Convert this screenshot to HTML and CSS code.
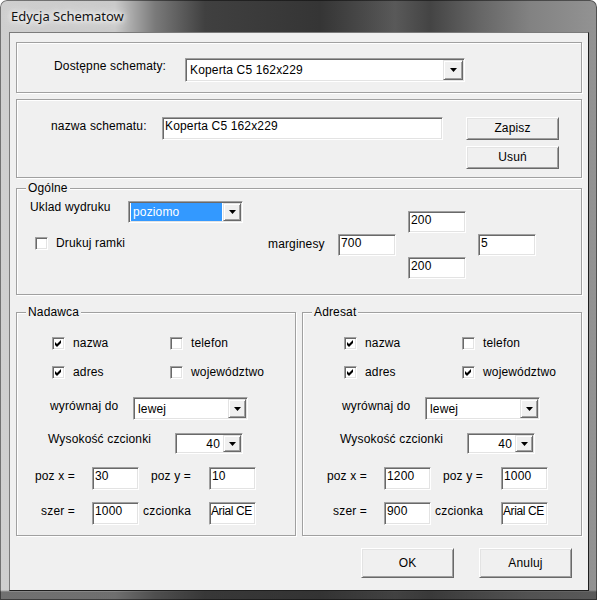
FILE: index.html
```html
<!DOCTYPE html>
<html lang="pl">
<head>
<meta charset="utf-8">
<title>Edycja Schematow</title>
<link rel="stylesheet" href="styles.css">
</head>
<body>
<div class="window">
  <div class="titlebar"><span class="title">Edycja Schematow</span></div>
  <div class="client">
    <div class="group g1">
      <div class="g1-row">
        <span class="lbl l-dost">Dostępne schematy:</span>
        <div class="combo c-scheme"><span class="combo-text">Koperta C5 162x229</span><span class="combo-btn wide"><svg width="7" height="4" viewBox="0 0 7 4"><path d="M0 0H7L3.5 4Z"/></svg></span></div>
      </div>
    </div>

    <div class="group g2">
      <div class="g2-row">
        <span class="lbl l-nazwa">nazwa schematu:</span>
        <div class="edit e-nazwa">Koperta C5 162x229</div>
        <div class="btncol">
          <div class="btn btn-sm">Zapisz</div>
          <div class="btn btn-sm">Usuń</div>
        </div>
      </div>
    </div>

    <div class="group g3">
      <span class="legend">Ogólne</span>
      <div class="gen">
        <div class="gen-left">
          <div class="frow">
            <span class="lbl l-uklad">Uklad wydruku</span>
            <div class="combo c-uklad"><span class="combo-text sel">poziomo</span><span class="combo-btn"><svg width="7" height="4" viewBox="0 0 7 4"><path d="M0 0H7L3.5 4Z"/></svg></span></div>
          </div>
          <label class="chk chk-ramki"><span class="cb"></span><span class="chk-t">Drukuj ramki</span></label>
        </div>
        <span class="lbl l-marg">marginesy</span>
        <div class="marg-grid">
          <div class="edit m-top">200</div>
          <div class="edit m-left">700</div>
          <div class="edit m-right">5</div>
          <div class="edit m-bottom">200</div>
        </div>
      </div>
    </div>

    <div class="cols">
      <div class="group gcol g4">
        <span class="legend">Nadawca</span>
        <div class="gbody">
          <div class="checks">
            <label class="chk"><span class="cb"><svg width="11" height="11" viewBox="0 0 11 11"><path d="M2 4L4 6L8 2V5L4 9L2 7Z"/></svg></span><span class="chk-t">nazwa</span></label>
            <label class="chk"><span class="cb"></span><span class="chk-t">telefon</span></label>
            <label class="chk"><span class="cb"><svg width="11" height="11" viewBox="0 0 11 11"><path d="M2 4L4 6L8 2V5L4 9L2 7Z"/></svg></span><span class="chk-t">adres</span></label>
            <label class="chk"><span class="cb"></span><span class="chk-t">województwo</span></label>
          </div>
          <div class="frow r-align">
            <span class="lbl l-align">wyrównaj do</span>
            <div class="combo c-align"><span class="combo-text">lewej</span><span class="combo-btn"><svg width="7" height="4" viewBox="0 0 7 4"><path d="M0 0H7L3.5 4Z"/></svg></span></div>
          </div>
          <div class="frow r-font">
            <span class="lbl l-font">Wysokość czcionki</span>
            <div class="combo c-font"><span class="combo-text right">40</span><span class="combo-btn"><svg width="7" height="4" viewBox="0 0 7 4"><path d="M0 0H7L3.5 4Z"/></svg></span></div>
          </div>
          <div class="frow r-pos">
            <span class="lbl l-c1">poz x =</span>
            <div class="edit e-sm">30</div>
            <span class="lbl l-c2">poz y =</span>
            <div class="edit e-sm">10</div>
          </div>
          <div class="frow r-sz">
            <span class="lbl l-c1">szer =</span>
            <div class="edit e-sm">1000</div>
            <span class="lbl l-c2">czcionka</span>
            <div class="edit e-sm tight">Arial CE</div>
          </div>
        </div>
      </div>

      <div class="group gcol g5">
        <span class="legend">Adresat</span>
        <div class="gbody">
          <div class="checks">
            <label class="chk"><span class="cb"><svg width="11" height="11" viewBox="0 0 11 11"><path d="M2 4L4 6L8 2V5L4 9L2 7Z"/></svg></span><span class="chk-t">nazwa</span></label>
            <label class="chk"><span class="cb"></span><span class="chk-t">telefon</span></label>
            <label class="chk"><span class="cb"><svg width="11" height="11" viewBox="0 0 11 11"><path d="M2 4L4 6L8 2V5L4 9L2 7Z"/></svg></span><span class="chk-t">adres</span></label>
            <label class="chk"><span class="cb"><svg width="11" height="11" viewBox="0 0 11 11"><path d="M2 4L4 6L8 2V5L4 9L2 7Z"/></svg></span><span class="chk-t">województwo</span></label>
          </div>
          <div class="frow r-align">
            <span class="lbl l-align">wyrównaj do</span>
            <div class="combo c-align"><span class="combo-text">lewej</span><span class="combo-btn"><svg width="7" height="4" viewBox="0 0 7 4"><path d="M0 0H7L3.5 4Z"/></svg></span></div>
          </div>
          <div class="frow r-font">
            <span class="lbl l-font">Wysokość czcionki</span>
            <div class="combo c-font"><span class="combo-text right">40</span><span class="combo-btn"><svg width="7" height="4" viewBox="0 0 7 4"><path d="M0 0H7L3.5 4Z"/></svg></span></div>
          </div>
          <div class="frow r-pos">
            <span class="lbl l-c1">poz x =</span>
            <div class="edit e-sm">1200</div>
            <span class="lbl l-c2">poz y =</span>
            <div class="edit e-sm">1000</div>
          </div>
          <div class="frow r-sz">
            <span class="lbl l-c1">szer =</span>
            <div class="edit e-sm">900</div>
            <span class="lbl l-c2">czcionka</span>
            <div class="edit e-sm tight">Arial CE</div>
          </div>
        </div>
      </div>
    </div>

    <div class="footer">
      <div class="btn btn-lg">OK</div>
      <div class="btn btn-lg">Anuluj</div>
    </div>
  </div>
</div>
</body>
</html>
```

FILE: styles.css
```css
* { box-sizing: border-box; }

body {
  margin: 0;
  background: #ffffff;
  font-family: "Liberation Sans", Arial, sans-serif;
  font-size: 12px;
  letter-spacing: 0.15px;
  color: #000;
}

.window {
  width: 597px;
  height: 600px;
  border-radius: 7px 7px 0 0;
  overflow: hidden;
  background:
    linear-gradient(to bottom, rgba(0,0,0,0) 0, rgba(0,0,0,0) 590px, rgba(50,50,50,0.6) 592px),
    linear-gradient(to right, #cfcfcf 0, #cacaca 115px, #7a7a7a 155px, #404040 205px, #353535 320px, #4a4a4a 365px, #595959 395px, #444 430px, #666 480px, #828282 530px, #939393 597px);
  box-shadow: inset 0 0 0 1px rgba(0,0,0,0.45);
}

.titlebar {
  height: 32px;
  display: flex;
  align-items: center;
  padding-left: 11px;
}

.title {
  font-family: "Noto Sans", "Open Sans", sans-serif;
  font-size: 13px;
  letter-spacing: 0;
  color: #111;
  text-shadow: 0 0 5px #fff, 0 0 9px #fff, 0 0 14px rgba(255,255,255,0.9);
}

.client {
  margin-left: 9px;
  width: 580px;
  height: 559px;
  border: 1px solid;
  border-color: #7a7a7a #1e1e1e #1e1e1e #7a7a7a;
  background: #f0f0f0;
  padding-left: 6px;
  overflow: hidden;
}

/* etched group box */
.group {
  border: 1px solid #a0a0a0;
  box-shadow: inset 1px 1px 0 #fff, 1px 1px 0 #fff;
}

.legend {
  display: block;
  width: max-content;
  margin: -8px 0 0 9px;
  padding: 0 2px;
  background: #f0f0f0;
  line-height: 14px;
  height: 14px;
}

.lbl {
  flex: none;
  line-height: 14px;
  white-space: nowrap;
}

.frow {
  display: flex;
  align-items: flex-start;
}

/* sunken edit */
.edit {
  flex: none;
  background: #fff;
  border: 1px solid;
  border-color: #a0a0a0 #fff #fff #a0a0a0;
  box-shadow: inset 1px 1px 0 #696969, inset -1px -1px 0 #e3e3e3;
  padding: 1px 1px 0 2px;
  line-height: 14px;
  white-space: nowrap;
  overflow: hidden;
}

.edit.tight { letter-spacing: -0.4px; padding-left: 1px; }

/* combo box */
.combo {
  flex: none;
  display: flex;
  background: #fff;
  border: 1px solid;
  border-color: #a0a0a0 #fff #fff #a0a0a0;
  box-shadow: inset 1px 1px 0 #696969, inset -1px -1px 0 #e3e3e3;
  padding: 1px;
}

.combo-text {
  flex: 1;
  display: flex;
  align-items: center;
  margin: 0 1px;
  padding-left: 2px;
  white-space: nowrap;
  overflow: hidden;
}

.combo-text.sel {
  background: #3399ff;
  color: #fff;
}

.combo-text.right {
  justify-content: flex-end;
  padding-right: 2px;
}

.combo-btn {
  flex: none;
  width: 18px;
  background: #f0f0f0;
  border: 1px solid;
  border-color: #e3e3e3 #696969 #696969 #e3e3e3;
  box-shadow: inset 1px 1px 0 #fff, inset -1px -1px 0 #a0a0a0;
  display: flex;
  align-items: center;
  justify-content: center;
}

.combo-btn.wide { width: 20px; }

.combo-btn svg { display: block; fill: #000; }

/* raised button */
.btn {
  display: flex;
  align-items: center;
  justify-content: center;
  background: #f0f0f0;
  border: 1px solid;
  border-color: #fff #696969 #696969 #fff;
  box-shadow: inset 1px 1px 0 #e3e3e3, inset -1px -1px 0 #a0a0a0;
  line-height: 14px;
}

.btn-sm { width: 93px; height: 23px; padding-bottom: 2px; }
.btn-lg { width: 93px; height: 30px; }

/* checkbox */
.chk {
  display: flex;
  align-items: center;
  height: 13px;
}

.cb {
  flex: none;
  width: 13px;
  height: 13px;
  background: #fff;
  border: 1px solid;
  border-color: #a0a0a0 #fff #fff #a0a0a0;
  box-shadow: inset 1px 1px 0 #696969, inset -1px -1px 0 #e3e3e3;
}

.cb svg { display: block; fill: #000; }

.chk-t {
  margin-left: 8px;
  line-height: 13px;
  white-space: nowrap;
}

/* group 1 */
.g1 { margin-top: 9px; width: 566px; height: 51px; }
.g1-row { display: flex; align-items: flex-start; padding: 15px 0 0 37px; }
.l-dost { width: 131px; margin-top: 1px; }
.c-scheme { width: 280px; height: 24px; }

/* group 2 */
.g2 { margin-top: 6px; width: 566px; height: 79px; }
.g2-row { display: flex; align-items: flex-start; padding: 17px 0 0 34px; }
.l-nazwa { width: 111px; margin-top: 2px; }
.e-nazwa { width: 281px; height: 23px; }
.btncol { margin-left: 23px; display: flex; flex-direction: column; gap: 6px; }

/* group 3 */
.g3 { margin-top: 10px; width: 566px; height: 107px; }
.gen { display: flex; align-items: flex-start; }
.gen-left { margin-left: 13px; padding-top: 6px; }
.l-uklad { width: 98px; margin-top: -1px; }
.c-uklad { width: 115px; height: 22px; }
.chk-ramki { margin: 14px 0 0 5px; }
.l-marg { margin-left: 25px; width: 70px; margin-top: 42px; }
.marg-grid {
  margin-top: 16px;
  display: grid;
  grid-template-columns: repeat(3, 58px);
  grid-template-rows: repeat(3, 23px);
  column-gap: 12px;
}
.marg-grid .edit { height: 22px; }
.m-top { grid-area: 1 / 2; }
.m-left { grid-area: 2 / 1; }
.m-right { grid-area: 2 / 3; }
.m-bottom { grid-area: 3 / 2; }

/* sender / recipient */
.cols { display: flex; gap: 6px; margin-top: 17px; }
.gcol { width: 280px; height: 224px; }
.g5 .gbody { padding-left: 6px; }

.checks {
  display: grid;
  grid-template-columns: 118px auto;
  row-gap: 16px;
  margin: 18px 0 0 35px;
}

.r-align { margin-top: 18px; }
.l-align { margin-left: 33px; width: 83px; margin-top: 2px; }
.c-align { width: 115px; height: 23px; }

.r-font { margin-top: 13px; }
.l-font { margin-left: 31px; width: 127px; margin-top: -1px; }
.c-font { width: 68px; height: 21px; }

.r-pos { margin-top: 13px; }
.r-sz { margin-top: 12px; }
.l-c1 { width: 75px; padding-right: 17px; text-align: right; margin-top: 2px; }
.l-c2 { width: 70px; padding-right: 18px; text-align: right; margin-top: 2px; }
.e-sm { width: 47px; height: 23px; }

/* footer */
.footer {
  display: flex;
  justify-content: flex-end;
  gap: 25px;
  margin-top: 12px;
  padding-right: 16px;
}
```
